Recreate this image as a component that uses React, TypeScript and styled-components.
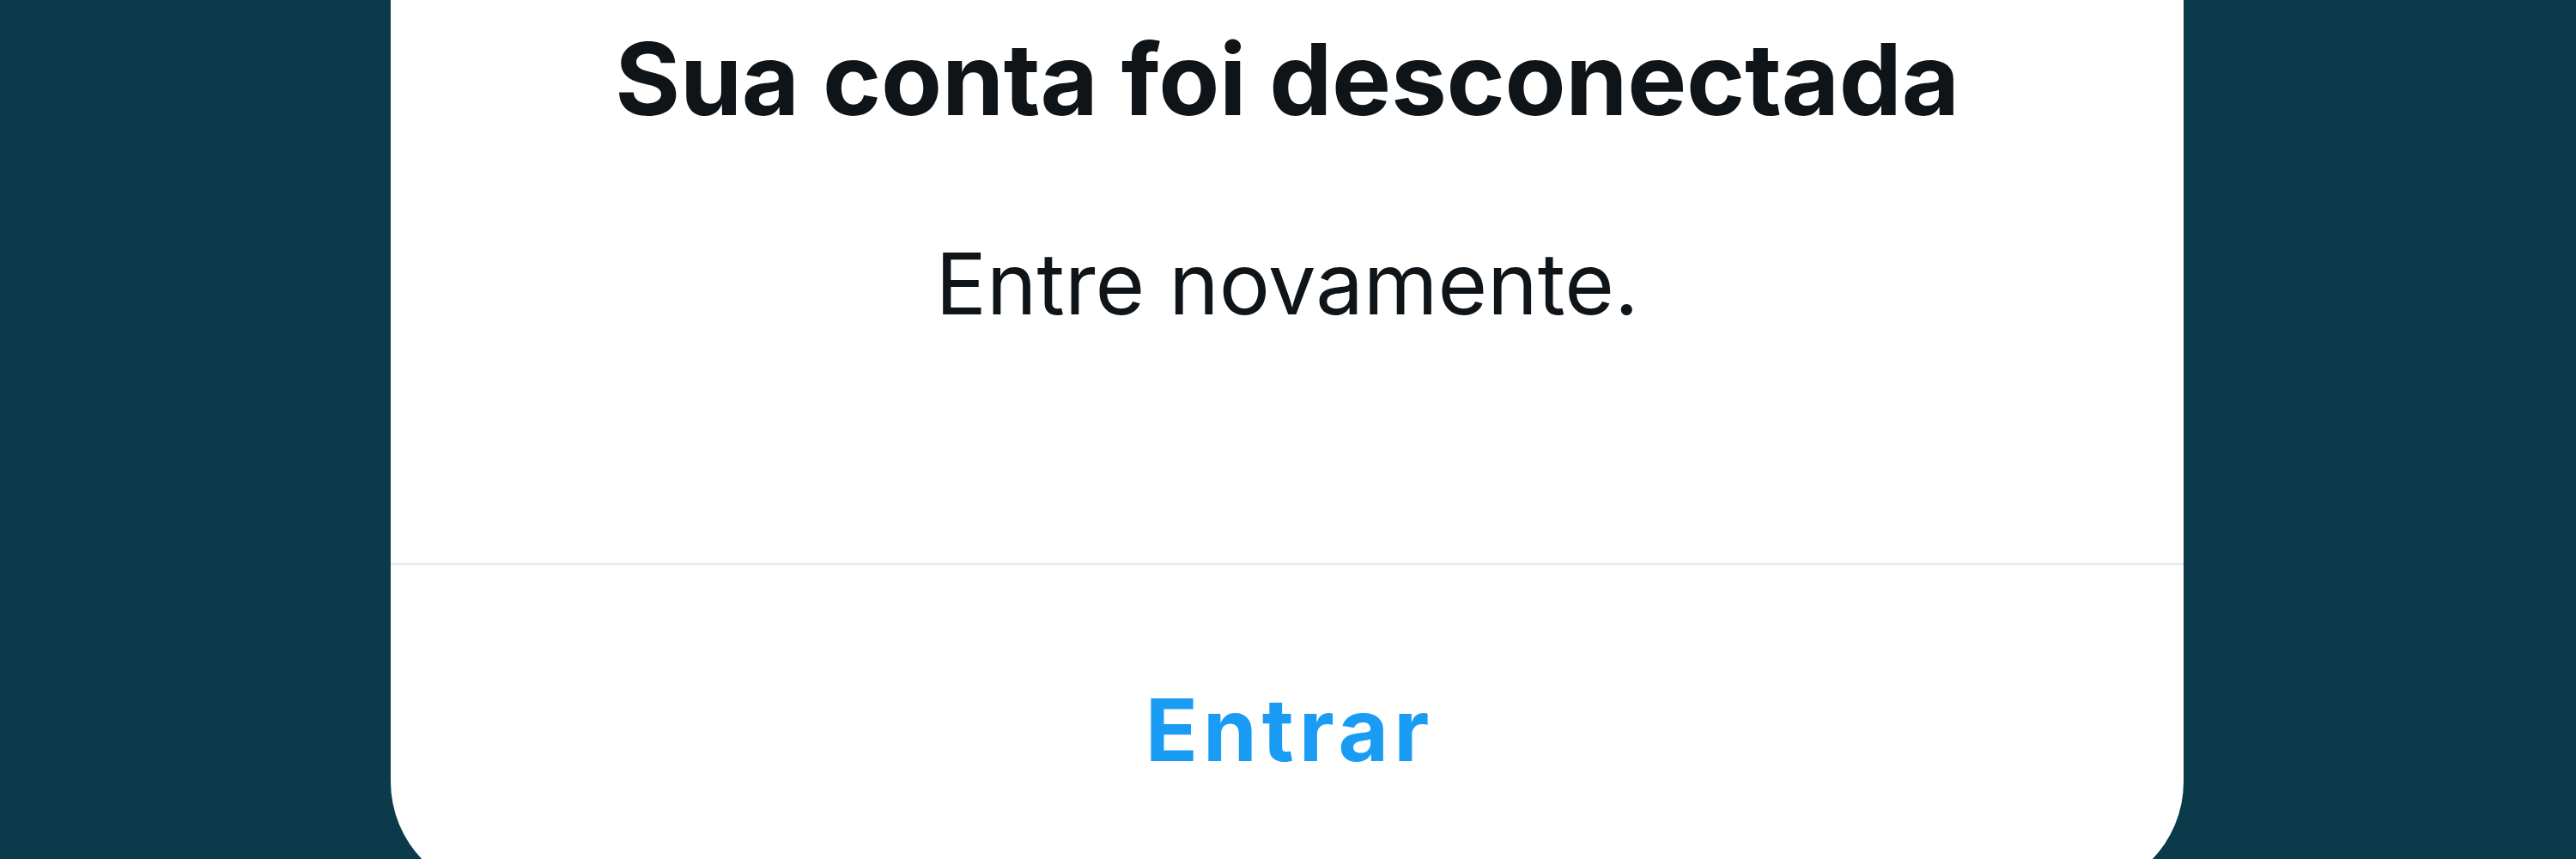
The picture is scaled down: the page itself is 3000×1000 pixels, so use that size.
import React from "react";
import styled, { createGlobalStyle } from "styled-components";

const Global = createGlobalStyle`
  html, body {
    margin: 0;
    padding: 0;
    background: #0b3a4a;
  }
  * { box-sizing: border-box; }
`;

const Page = styled.div`
  width: 3000px;
  height: 1000px;
  overflow: hidden;
  background: #0b3a4a;
  display: flex;
  justify-content: center;
  align-items: flex-end;
  font-family: Inter, "Liberation Sans", sans-serif;
`;

const Card = styled.div`
  width: 2088px;
  margin-bottom: -40px;
  margin-left: -2px;
  background: #ffffff;
  border-radius: 130px;
  display: flex;
  flex-direction: column;
`;

const Content = styled.div`
  padding: 260px 60px 265px;
  display: flex;
  flex-direction: column;
  align-items: center;
  gap: 108px;
`;

const Title = styled.h1`
  margin: 0;
  font-size: 116px;
  line-height: 140px;
  font-weight: 700;
  color: #0f1419;
  letter-spacing: -0.3px;
`;

const Message = styled.p`
  margin: 0;
  font-size: 99px;
  line-height: 120px;
  font-weight: 400;
  color: #0f1419;
`;

const Divider = styled.div`
  height: 3px;
  background: #e9ecee;
`;

const Action = styled.button`
  height: 382px;
  border: none;
  background: transparent;
  display: flex;
  align-items: center;
  justify-content: center;
  font-family: inherit;
  font-size: 101px;
  font-weight: 700;
  letter-spacing: 6px;
  color: #1a9cf5;
  cursor: pointer;
  padding: 0 0 0 6px;
`;

export default function App() {
  return (
    <>
      <Global />
      <Page>
        <Card>
          <Content>
            <Title>Sua conta foi desconectada</Title>
            <Message>Entre novamente.</Message>
          </Content>
          <Divider />
          <Action>Entrar</Action>
        </Card>
      </Page>
    </>
  );
}
